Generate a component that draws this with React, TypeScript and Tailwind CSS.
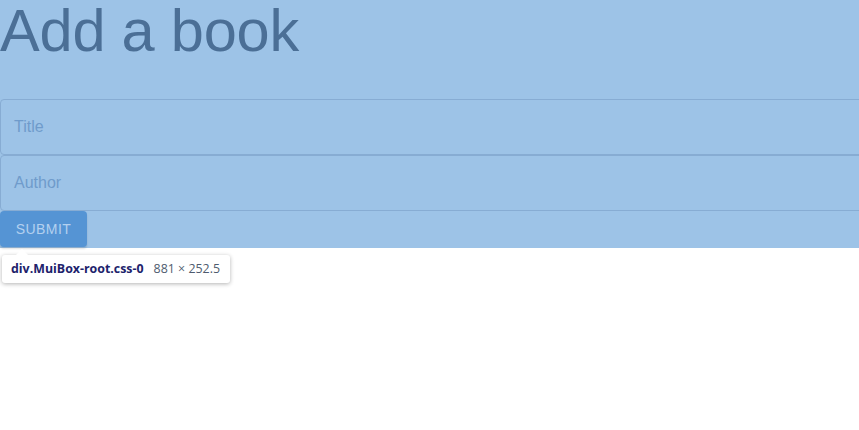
export default function App() {
  return (
    <main className="relative w-[859px] h-[430px] overflow-hidden bg-white font-['Liberation_Sans',Arial,sans-serif]">
      {/* highlighted box */}
      <section className="w-[881px] h-[248px] bg-[#9dc3e7] flex flex-col">
        <h1 className="text-[59.5px] leading-[68px] text-[#4b6f96] -mt-[3.5px] mb-[34.5px] tracking-[-0.2px]">Add a book</h1>
        <div className="h-[56px] border border-[#87acd3] rounded-[4px] flex items-center px-[13px] text-[16px] text-[#6f9bcb]">
          Title
        </div>
        <div className="h-[56px] border border-[#87acd3] rounded-[4px] flex items-center px-[13px] text-[16px] text-[#6f9bcb]">
          Author
        </div>
        <div className="flex">
          <button className="h-[36px] w-[87px] bg-[#5594d4] rounded-[4px] text-[14px] tracking-[0.4px] text-[#b3d0ef] shadow-[0_2px_2px_rgba(0,0,0,0.12)]">
            SUBMIT
          </button>
        </div>
      </section>

      {/* devtools tooltip */}
      <div className="absolute left-[2px] top-[255px] w-[228px] h-[28px] bg-white rounded-[3px] shadow-[0_1px_4px_rgba(0,0,0,0.3)] flex items-center px-[9px] gap-[10px] text-[12.4px] font-['Open_Sans',sans-serif]">
        <span className="absolute -top-[6px] left-[14px] w-0 h-0 border-l-[6px] border-r-[6px] border-b-[6px] border-l-transparent border-r-transparent border-b-white" />
        <span className="font-bold text-[#20226b]">div.MuiBox-root.css-0</span>
        <span className="text-[#4e5b6e]">881 × 252.5</span>
      </div>
    </main>
  );
}
